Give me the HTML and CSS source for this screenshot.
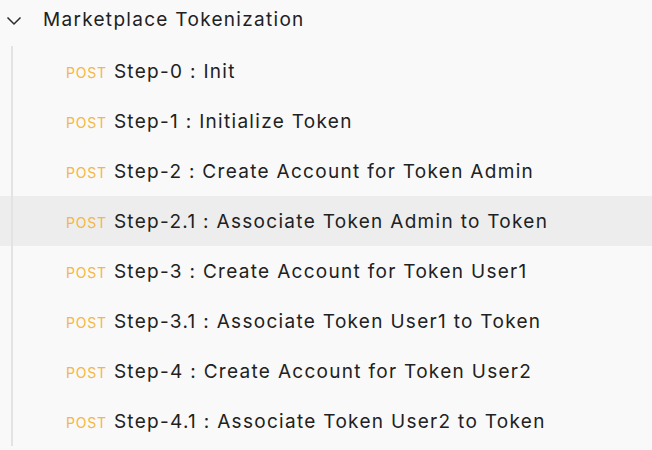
FILE: index.html
```html
<!DOCTYPE html>
<html>
<head>
<meta charset="utf-8">
<link rel="stylesheet" href="styles.css">
</head>
<body>
<div class="folder">
  <div class="folder-head">
    <svg class="chev" width="16" height="10" viewBox="0 0 16 10"><path d="M1.5 1.5 L8 8 L14.5 1.5" fill="none" stroke="#2b2b2b" stroke-width="1.5"/></svg>
    <span class="folder-name">Marketplace Tokenization</span>
  </div>
  <div class="items">
    <div class="item"><span class="method">POST</span><span class="name">Step-0 : Init</span></div>
    <div class="item"><span class="method">POST</span><span class="name">Step-1 : Initialize Token</span></div>
    <div class="item"><span class="method">POST</span><span class="name">Step-2 : Create Account for Token Admin</span></div>
    <div class="item active"><span class="method">POST</span><span class="name">Step-2.1 : Associate Token Admin to Token</span></div>
    <div class="item"><span class="method">POST</span><span class="name">Step-3 : Create Account for Token User1</span></div>
    <div class="item"><span class="method">POST</span><span class="name">Step-3.1 : Associate Token User1 to Token</span></div>
    <div class="item"><span class="method">POST</span><span class="name">Step-4 : Create Account for Token User2</span></div>
    <div class="item"><span class="method">POST</span><span class="name">Step-4.1 : Associate Token User2 to Token</span></div>
  </div>
</div>
</body>
</html>
```
FILE: styles.css
```css
html, body {
  margin: 0;
  padding: 0;
  background: #f9f9f9;
  font-family: Inter, "Noto Sans", sans-serif;
  color: #212121;
}
.folder-head {
  height: 46px;
  display: flex;
  align-items: center;
  padding-left: 6px;
  gap: 21px;
}
.chev { display: block; margin-bottom: 4px; }
.folder-name {
  font-size: 19px;
  letter-spacing: 1.3px;
  padding-bottom: 8px;
}
.items {
  position: relative;
}
.items::before {
  content: "";
  position: absolute;
  left: 11px;
  top: 0;
  bottom: 0;
  width: 2px;
  background: #e3e3e3;
}
.item {
  height: 50px;
  display: flex;
  align-items: center;
  padding-left: 66px;
  gap: 7px;
}
.item.active { background: #ededed; }
.method {
  color: #f4b644;
  font-size: 14px;
  letter-spacing: 0.8px;
  padding-top: 3px;
}
.name {
  font-size: 19px;
  letter-spacing: 1.3px;
}
```
